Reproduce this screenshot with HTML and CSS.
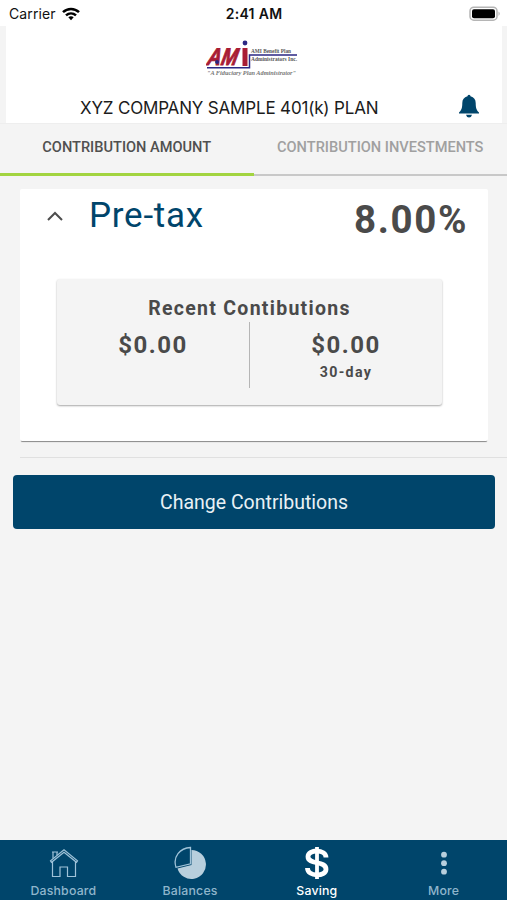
FILE: index.html
```
<!DOCTYPE html>
<html lang="en">
<head>
    <meta charset="UTF-8">
    <meta name="viewport" content="width=device-width, initial-scale=1.0">
    <title>Contributions</title>
    <link rel="stylesheet" href="styles.css">
</head>
<body>
    <div class="status-bar">
        <div class="carrier">
            <span>Carrier</span>
            <svg width="18" height="14" viewBox="0 0 18 14" fill="none" stroke="#000" stroke-width="2.5">
                <path d="M1 5.2C5.500 .8 12.500 .8 17 5.200"/>
                <path d="M4 8.400C6.900 5.700 11.100 5.700 14 8.400"/>
                <path d="M6.300 10.300Q9 8 11.700 10.300L9 13.200Z" fill="#000" stroke="none"/>
            </svg>
        </div>
        <span class="time">2:41 AM</span>
        <svg class="battery" width="32" height="16" viewBox="0 0 32 16">
            <rect x="1" y="1.200" width="27" height="13" rx="3.800" fill="#fff" stroke="#b5b5b5" stroke-width="1.500"/>
            <rect x="3" y="3.200" width="23" height="9" rx="2" fill="#000"/>
            <path d="M29.500 5.500Q32 7.700 29.500 10Z" fill="#b5b5b5"/>
        </svg>
    </div>

    <header class="header">
        <svg class="logo" width="98" height="40" viewBox="0 0 98 40">
            <text class="logo-mark" x="6" y="26.500" transform="skewX(-12)" textLength="30" lengthAdjust="spacingAndGlyphs">AM</text>
            <rect x="36.500" y="9" width="5" height="18" fill="#a81c35"/>
            <circle cx="39" cy="4" r="2.400" fill="#2b2784"/>
            <circle cx="11" cy="23" r="2" fill="#2b2784"/>
            <path d="M1 28.700H43.500V16H91" fill="none" stroke="#2b2784" stroke-width="1.500"/>
            <text class="logo-name" x="45" y="14" textLength="40" lengthAdjust="spacingAndGlyphs">AMI Benefit Plan</text>
            <text class="logo-name" x="45" y="22" textLength="46" lengthAdjust="spacingAndGlyphs">Administrators Inc.</text>
            <text class="logo-tag" x="1" y="36" textLength="89" lengthAdjust="spacingAndGlyphs">"A Fiduciary Plan Administrator"</text>
        </svg>
        <div class="plan-row">
            <h1>XYZ COMPANY SAMPLE 401(k) PLAN</h1>
            <svg class="bell" width="20" height="24" viewBox="0 0 20 24" fill="#00456b">
                <path d="M8.500 2.200Q8.500 .7 10 .7T11.500 2.200C15 3 16.700 5.500 16.700 9C16.700 14.500 17.800 16.500 20 18.500V19.400H0V18.500C2.200 16.500 3.300 14.500 3.300 9C3.300 5.500 5 3 8.500 2.200Z"/>
                <path d="M7 20.800H13Q12.500 23.500 10 23.500T7 20.800Z"/>
            </svg>
        </div>
    </header>

    <nav class="tabs">
        <div class="tab active"><span>CONTRIBUTION AMOUNT</span></div>
        <div class="tab"><span>CONTRIBUTION INVESTMENTS</span></div>
    </nav>

    <main class="content">
        <section class="card">
            <div class="card-head">
                <svg width="16" height="10" viewBox="0 0 16 10" fill="none" stroke="#4d4d4d" stroke-width="2">
                    <path d="M1 9L8 2L15 9"/>
                </svg>
                <h2>Pre-tax</h2>
                <span class="percent">8.00%</span>
            </div>
            <div class="recent">
                <h3>Recent Contibutions</h3>
                <div class="amounts">
                    <div class="amount">$0.00</div>
                    <div class="amount">$0.00<small>30-day</small></div>
                </div>
            </div>
        </section>
        <div class="divider"></div>
        <button class="change-btn">Change Contributions</button>
    </main>

    <footer class="bottom-nav">
        <div class="nav-item">
            <svg width="32" height="34" viewBox="0 0 32 34" fill="none" stroke="#9fc3d9" stroke-width="1.200">
                <path d="M5.500 15V30.500H13V21H20.500V30.500H28.500V15"/>
                <path d="M4.500 16.300L3.500 14.800L17 3.800L30.500 14.800L29.500 16.300L17 6.300Z"/>
                <path d="M6 12.500V6H10V9.300M5 6H11"/>
            </svg>
            <span>Dashboard</span>
        </div>
        <div class="nav-item">
            <svg width="34" height="34" viewBox="0 0 34 34">
                <path d="M18.500 4A14.500 14.500 0 1 1 4.500 22.500L18.500 19Z" fill="#b8cfdd"/>
                <path d="M17.500 1.500V17.800L3 21.300C-.5 10.500 7 2 17.500 1.500Z" fill="#00456b" stroke="#9fc3d9" stroke-width="1.300"/>
            </svg>
            <span>Balances</span>
        </div>
        <div class="nav-item current">
            <svg width="26" height="34" viewBox="0 0 26 34" fill="none" stroke="#fff">
                <path d="M13 1V33" stroke-width="3.800"/>
                <path d="M22 11.500C22 3 4 3 4 10.700C4 19 22 14.500 22 23.200C22 31 3.500 31 3.500 22" stroke-width="4.800"/>
            </svg>
            <span>Saving</span>
        </div>
        <div class="nav-item">
            <svg width="8" height="34" viewBox="0 0 8 34" fill="#b8cfdd">
                <circle cx="4" cy="8.700" r="2.900"/>
                <circle cx="4" cy="17.200" r="2.900"/>
                <circle cx="4" cy="25.700" r="2.900"/>
            </svg>
            <span>More</span>
        </div>
    </footer>
</body>
</html>
```
FILE: styles.css
```
* {
    box-sizing: border-box;
}
body {
    margin: 0;
    height: 900px;
    display: flex;
    flex-direction: column;
    overflow: hidden;
    font-family: Roboto, sans-serif;
    background-color: #f4f4f4;
    color: #4a4a4a;
}
h1, h2, h3 {
    margin: 0;
}
.status-bar {
    height: 26px;
    display: grid;
    grid-template-columns: 1fr auto 1fr;
    align-items: center;
    padding: 1px 6px 0 9px;
    background: #fff;
    color: #111;
    font-family: Inter, sans-serif;
    font-size: 14px;
}
.carrier {
    display: flex;
    align-items: center;
    gap: 6px;
    letter-spacing: 0.1px;
}
.time {
    margin-right: 2px;
    font-weight: 600;
    letter-spacing: 0.3px;
}
.battery {
    justify-self: end;
}
.header {
    height: 97px;
    margin: 0 5px 0 6px;
    padding-top: 13px;
    background: #fff;
}
.logo {
    display: block;
    margin-left: 200px;
}
.logo-mark {
    font: italic bold 24px "Liberation Sans", sans-serif;
    fill: #a81c35;
    stroke: #a81c35;
    stroke-width: 1px;
}
.logo-name {
    font: bold 6px "Liberation Serif", serif;
    fill: #555;
}
.logo-tag {
    font: italic bold 6px "Liberation Serif", serif;
    fill: #777;
}
.plan-row {
    display: flex;
    justify-content: space-between;
    align-items: center;
    height: 24px;
    margin-top: 15px;
    padding: 0 23px 0 74px;
}
.plan-row h1 {
    padding-top: 3px;
    font: 400 17px Inter, sans-serif;
    letter-spacing: -0.17px;
    color: #1c1c1c;
    white-space: nowrap;
}
.tabs {
    display: flex;
    height: 53px;
    border-top: 1px solid #eee;
}
.tab {
    flex: 1;
    padding-top: 15px;
    border-bottom: 2px solid #c8c8c8;
    text-align: center;
    font-size: 14.6px;
    font-weight: 500;
    line-height: 17px;
    color: #a0a0a0;
    white-space: nowrap;
}
.tab.active {
    border-bottom: 3px solid #a2d440;
    color: #505050;
}
.content {
    flex: 1;
    padding-top: 13px;
}
.card {
    height: 252px;
    margin: 0 19px 0 20px;
    padding: 0 46px 0 37px;
    background: #fff;
    border-radius: 2px;
    box-shadow: 0 2px 1px -1px #888;
}
.card-head {
    display: flex;
    height: 90px;
    margin: 0 -26px 0 -10px;
}
.card-head svg {
    margin: 22px 26px 0 0;
}
.card-head h2 {
    margin-top: 6px;
    font-size: 35px;
    font-weight: 400;
    line-height: 41px;
    letter-spacing: 0.75px;
    color: #00456b;
}
.percent {
    margin: 7px 0 0 auto;
    font-size: 38.5px;
    font-weight: 700;
    line-height: 48px;
    letter-spacing: 1.6px;
}
.recent {
    height: 126px;
    padding-top: 17px;
    border-radius: 3px;
    background: #f4f4f4;
    box-shadow: 0 1px 2px rgba(0, 0, 0, 0.35);
    text-align: center;
}
.recent h3 {
    font-size: 19.5px;
    line-height: 25px;
    letter-spacing: 1.28px;
}
.amounts {
    display: flex;
    height: 66px;
    margin-top: 1px;
}
.amount {
    flex: 1;
    padding-top: 9px;
    font-size: 24px;
    font-weight: 700;
    line-height: 28px;
    letter-spacing: 1.5px;
}
.amount + .amount {
    border-left: 1px solid #b5b5b5;
}
.amount small {
    display: block;
    font-size: 14.2px;
    line-height: 27px;
    letter-spacing: 1.3px;
}
.divider {
    height: 1px;
    margin: 16px 0 17px 20px;
    background: #e0e0e0;
}
.change-btn {
    display: block;
    width: 482px;
    height: 54px;
    margin-left: 13px;
    padding: 0;
    border: none;
    border-radius: 4px;
    background-color: #00456b;
    color: #e9f1f5;
    font-family: Roboto, sans-serif;
    font-size: 19.5px;
}
.bottom-nav {
    display: flex;
    height: 60px;
    background-color: #00456b;
}
.nav-item {
    flex: 1;
    display: flex;
    flex-direction: column;
    align-items: center;
    padding-top: 6px;
    font-family: Inter, sans-serif;
    font-size: 12.3px;
    font-weight: 500;
    line-height: 16px;
    letter-spacing: 0.2px;
    color: #8fb5cc;
}
.nav-item span {
    margin-top: 3px;
}
.nav-item.current {
    color: #fff;
}
```
